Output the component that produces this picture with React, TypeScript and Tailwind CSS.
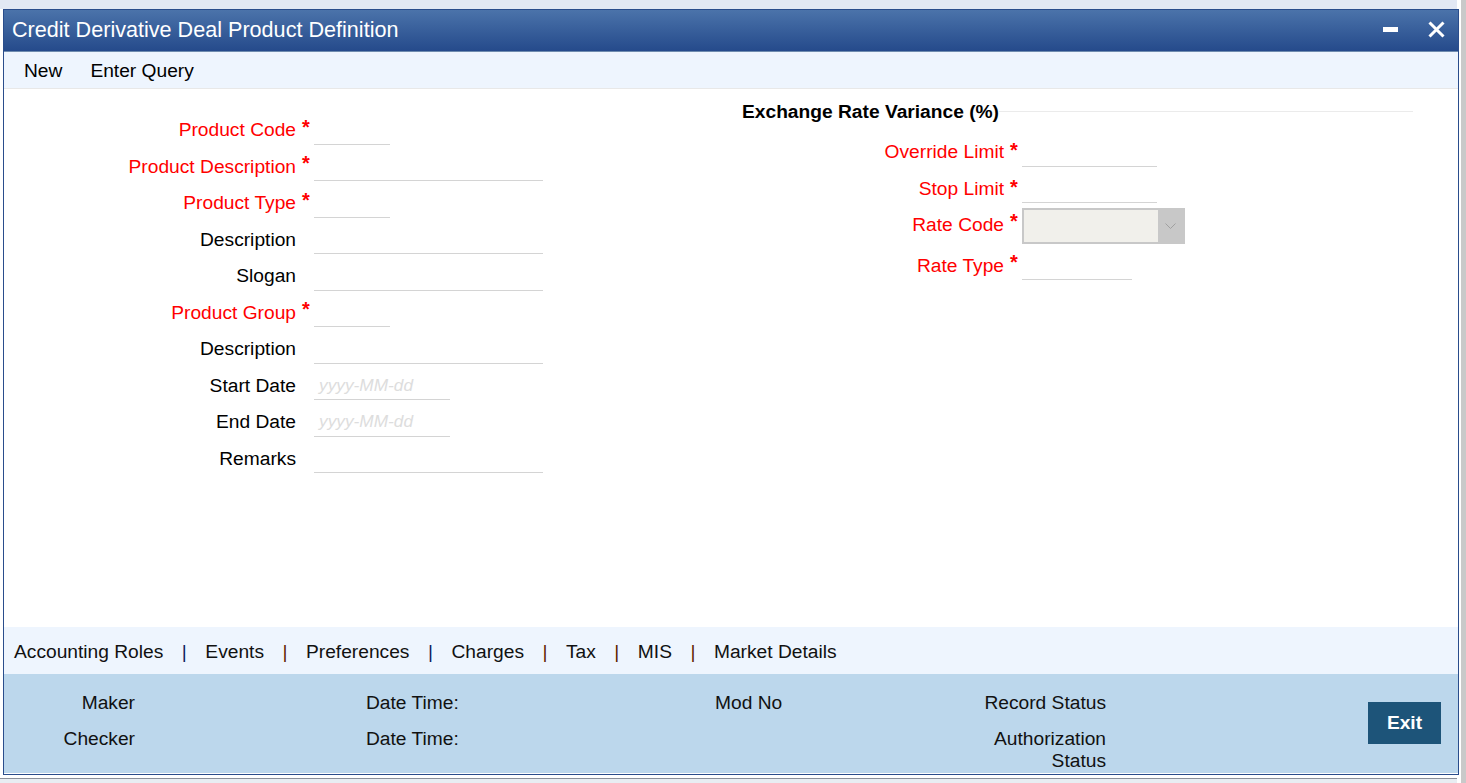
const font = "[font-family:'Liberation_Sans',Arial,sans-serif]";

interface FieldProps {
  label: string;
  required?: boolean;
  width: string;
  placeholder?: string;
}

function Star() {
  return <div className="w-[18px] shrink-0 pl-[6px] text-[20px] font-bold leading-[24px] text-[#ff0000]">*</div>;
}

function Field({ label, required, width, placeholder }: FieldProps) {
  return (
    <div className="flex h-[36.5px] items-start">
      <div className={`w-[292px] shrink-0 pt-[6.5px] text-right text-[19.2px] leading-[24px] ${required ? 'text-[#ff0000]' : 'text-black'}`}>
        {label}
      </div>
      <div className="w-[18px] shrink-0 pt-[3px]">{required && <Star />}</div>
      <div className={`${width} h-[33px] border-b border-[#d4d4d4] pl-[5px] pt-[5.5px] text-[17.28px] italic leading-[24px] text-[#dddddd]`}>
        {placeholder}
      </div>
    </div>
  );
}

const tabs = [
  { name: 'Accounting Roles', color: 'text-[#101f5e]' },
  { name: 'Events', color: 'text-[#5c1e00]' },
  { name: 'Preferences', color: 'text-[#101f5e]' },
  { name: 'Charges', color: 'text-[#5c1e00]' },
  { name: 'Tax', color: 'text-[#5c1e00]' },
  { name: 'MIS', color: 'text-[#5c1e00]' },
  { name: 'Market Details', color: '' },
];

export default function App() {
  return (
    <div className={`${font} flex h-[783px] w-[1466px] overflow-hidden bg-white`}>
      <div className="flex w-[1461px] shrink-0 flex-col">
        <div className="h-[9px] w-[1457px] shrink-0 bg-[#e2e8f4]" />
        <div className="ml-[3px] flex h-[766px] w-[1456px] shrink-0 flex-col border border-[#2a4d8c] bg-white">
          {/* title bar */}
          <div className="flex h-[42px] shrink-0 items-center justify-between border-b border-[#6f8caf] bg-gradient-to-b from-[#4b73aa] to-[#254a8b] pb-[2px] pl-[8px] pr-[13px]">
            <span className="text-[21.6px] leading-[28px] text-white">Credit Derivative Deal Product Definition</span>
            <div className="flex items-center gap-[30px]">
              <div className="h-[5px] w-[15px] bg-white" />
              <svg width="17" height="17" viewBox="0 0 17 17" fill="none">
                <path d="M1.5 1.5 L15.5 15.5 M15.5 1.5 L1.5 15.5" stroke="#ffffff" strokeWidth="3" />
              </svg>
            </div>
          </div>

          {/* toolbar */}
          <div className="flex h-[37px] shrink-0 items-center gap-[28px] border-b border-[#e8e8e8] bg-[#eef5fe] pl-[20px] pt-[2px] text-[19.2px] text-black">
            <span>New</span>
            <span>Enter Query</span>
          </div>

          {/* form */}
          <div className="flex flex-1">
            <div className="w-[539px] shrink-0 pt-[22.5px]">
              <Field label="Product Code" required width="w-[76px]" />
              <Field label="Product Description" required width="w-[229px]" />
              <Field label="Product Type" required width="w-[76px]" />
              <Field label="Description" width="w-[229px]" />
              <Field label="Slogan" width="w-[229px]" />
              <Field label="Product Group" required width="w-[76px]" />
              <Field label="Description" width="w-[229px]" />
              <Field label="Start Date" width="w-[136px]" placeholder="yyyy-MM-dd" />
              <Field label="End Date" width="w-[136px]" placeholder="yyyy-MM-dd" />
              <Field label="Remarks" width="w-[229px]" />
            </div>

            <div className="ml-[199px] w-[671px] shrink-0 pt-[11px]">
              <div className="flex h-[24px] items-center">
                <span className="shrink-0 text-[19.2px] font-bold leading-[24px] text-black">Exchange Rate Variance (%)</span>
                <div className="mb-[1px] h-px flex-1 bg-[#ebebeb]" />
              </div>
              <div className="mt-[14px] flex h-[29px] items-start">
                <div className="w-[262px] pt-[2px] text-right text-[19.2px] leading-[24px] text-[#ff0000]">Override Limit</div>
                <Star />
                <div className="h-[29px] w-[135px] border-b border-[#d4d4d4]" />
              </div>
              <div className="mt-[8px] flex h-[28px] items-start">
                <div className="w-[262px] pt-[2px] text-right text-[19.2px] leading-[24px] text-[#ff0000]">Stop Limit</div>
                <Star />
                <div className="h-[28px] w-[135px] border-b border-[#d4d4d4]" />
              </div>
              <div className="mt-[5px] flex h-[36px] items-start">
                <div className="w-[262px] pt-[5px] text-right text-[19.2px] leading-[24px] text-[#ff0000]">Rate Code</div>
                <div className="pt-[1px]">
                  <Star />
                </div>
                <div className="flex h-[36px] w-[163px] border-2 border-[#c8c8c8] bg-[#f1f0eb]">
                  <div className="flex-1" />
                  <div className="flex w-[25px] items-center justify-center bg-[#c8c8c8]">
                    <svg width="11" height="7" viewBox="0 0 11 7" fill="none">
                      <path d="M0.5 0.5 L5.5 5.5 L10.5 0.5" stroke="#a0a0a0" strokeWidth="1" />
                    </svg>
                  </div>
                </div>
              </div>
              <div className="mt-[6px] flex h-[30px] items-start">
                <div className="w-[262px] pt-[4px] text-right text-[19.2px] leading-[24px] text-[#ff0000]">Rate Type</div>
                <Star />
                <div className="h-[30px] w-[110px] border-b border-[#d4d4d4]" />
              </div>
            </div>
          </div>

          {/* tabs */}
          <div className="flex h-[47px] shrink-0 items-center bg-[#eef5fe] pl-[10px] pt-[4px] text-[19.2px] text-[#111111]">
            {tabs.map((t, i) => (
              <span key={t.name} className="flex items-center">
                {i > 0 && <span className={`${tabs[i - 1].color} w-[42px] text-center`}>|</span>}
                <span>{t.name}</span>
              </span>
            ))}
          </div>

          {/* audit footer */}
          <div className="flex h-[99px] shrink-0 bg-[#bcd7ec] text-[19.2px] leading-[22px] text-[#111111]">
            <div className="w-[131px] shrink-0 pt-[18px] text-right">
              <div className="h-[36px]">Maker</div>
              <div>Checker</div>
            </div>
            <div className="ml-[231px] w-[200px] shrink-0 pt-[18px]">
              <div className="h-[36px]">Date Time:</div>
              <div>Date Time:</div>
            </div>
            <div className="ml-[149px] w-[100px] shrink-0 pt-[18px]">Mod No</div>
            <div className="ml-[71px] w-[220px] shrink-0 pt-[18px] text-right">
              <div className="h-[36px]">Record Status</div>
              <div>
                Authorization
                <br />
                Status
              </div>
            </div>
            <div className="ml-[262px] shrink-0 pt-[28px]">
              <button className="h-[42px] w-[73px] bg-[#1d5479] text-[19.2px] font-bold text-white">Exit</button>
            </div>
          </div>
          <div className="h-[1px] shrink-0 bg-white" />
        </div>
        <div className="mt-[3px] h-[5px] w-[1457px] shrink-0 border-t border-[#8a8f9a] bg-[#e8edf2]" />
      </div>
      <div className="w-[5px] shrink-0 bg-[#c9c9c9]" />
    </div>
  );
}
